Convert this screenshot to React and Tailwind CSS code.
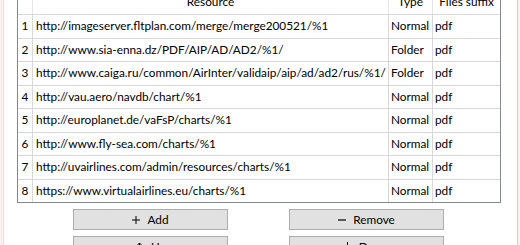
import React from "react";

const rows = [
  ["http://imageserver.fltplan.com/merge/merge200521/%1", "Normal"],
  ["http://www.sia-enna.dz/PDF/AIP/AD/AD2/%1/", "Folder"],
  ["http://www.caiga.ru/common/AirInter/validaip/aip/ad/ad2/rus/%1/", "Folder"],
  ["http://vau.aero/navdb/chart/%1", "Normal"],
  ["http://europlanet.de/vaFsP/charts/%1", "Normal"],
  ["http://www.fly-sea.com/charts/%1", "Normal"],
  ["http://uvairlines.com/admin/resources/charts/%1", "Normal"],
  ["https://www.virtualairlines.eu/charts/%1", "Normal"],
];

function Btn({ icon, label }) {
  return (
    <div className="w-[155px] h-[21px] bg-[#e1e1e1] border border-[#adadad] flex items-center justify-center gap-[7px] text-[11.8px] text-black">
      {icon}
      <span>{label}</span>
    </div>
  );
}

const Plus = (
  <svg width="8" height="8" viewBox="0 0 8 8"><path d="M4 0v8M0 4h8" stroke="#000" strokeWidth="1" /></svg>
);
const Minus = (
  <svg width="8" height="8" viewBox="0 0 8 8"><path d="M0 4h8" stroke="#000" strokeWidth="1.2" /></svg>
);
const Up = (
  <svg width="9" height="10" viewBox="0 0 9 10"><path d="M4.5 1v9M1 4.5l3.5-3.5 3.5 3.5" stroke="#000" strokeWidth="1" fill="none" /></svg>
);
const Down = (
  <svg width="9" height="10" viewBox="0 0 9 10"><path d="M4.5 0v9M1 5.5l3.5 3.5 3.5-3.5M0 9.5h9" stroke="#000" strokeWidth="1" fill="none" /></svg>
);

export default function App() {
  return (
    <div
      className="w-[520px] h-[245px] overflow-hidden bg-white flex text-black"
      style={{ fontFamily: 'Lato, "Noto Sans", sans-serif' }}
    >
      <div className="w-[4px] bg-[#fbeff0] border-r border-[#f0dede]" />
      <div className="flex-1 flex flex-col pl-[13px] mt-[-10px]">
        <div className="w-[484px] border-l border-r border-b border-[#828790] text-[11.8px] leading-none">
          <div className="flex h-[24px]">
            <div className="w-[15px] border-r border-[#e5e5e5]" />
            <div className="w-[356px] border-r border-[#e5e5e5] flex items-center justify-center">Resource</div>
            <div className="w-[44px] border-r border-[#e5e5e5] flex items-center justify-center">Type</div>
            <div className="w-[67px] flex items-center justify-center">Files suffix</div>
          </div>
          {rows.map(([url, type], i) => (
            <div key={i} className="flex h-[23.5px] border-t border-[#d8d8d8]">
              <div className="w-[15px] border-r border-[#d8d8d8] flex items-center justify-center">{i + 1}</div>
              <div className="w-[356px] border-r border-[#d8d8d8] flex items-center pl-[3px] whitespace-nowrap overflow-hidden">{url}</div>
              <div className="w-[44px] border-r border-[#d8d8d8] flex items-center pl-[2px]">{type}</div>
              <div className="w-[67px] flex items-center pl-[2px]">pdf</div>
            </div>
          ))}
        </div>
        <div className="flex gap-[61px] pl-[56px] mt-[6px]">
          <Btn icon={Plus} label="Add" />
          <Btn icon={Minus} label="Remove" />
        </div>
        <div className="flex gap-[61px] pl-[56px] mt-[6px]">
          <Btn icon={Up} label="Up" />
          <Btn icon={Down} label="Down" />
        </div>
      </div>
      <div className="w-[3px] border-l border-[#d0d0d0] bg-[#fbeff0]" />
    </div>
  );
}
